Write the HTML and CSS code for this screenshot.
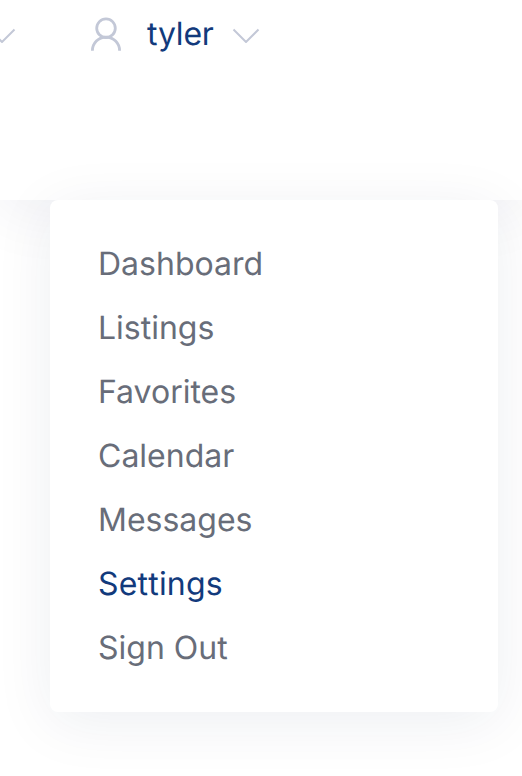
FILE: index.html
```
<!DOCTYPE html>
<html lang="en">
<head>
<meta charset="utf-8">
<title>Account menu</title>
<link rel="stylesheet" href="styles.css">
</head>
<body>
<header class="header">
  <nav class="bar">
    <svg class="chevron chevron-prev" width="28" height="16" viewBox="0 0 28 16"><path d="M1.500 2.500 14 15 26.500 2.500"/></svg>
    <a class="user">
      <svg class="avatar" width="32" height="36" viewBox="0 0 32 36"><circle cx="16" cy="11.200" r="9.300"/><path d="M2.400 33.700A13.600 13.600 0 0 1 29.600 33.700"/></svg>
      <span class="name">tyler</span>
      <svg class="chevron" width="28" height="16" viewBox="0 0 28 16"><path d="M1.500 2.500 14 15 26.500 2.500"/></svg>
    </a>
  </nav>
</header>
<main class="page">
  <ul class="menu">
    <li>Dashboard</li>
    <li>Listings</li>
    <li>Favorites</li>
    <li>Calendar</li>
    <li>Messages</li>
    <li class="active">Settings</li>
    <li>Sign Out</li>
  </ul>
</main>
</body>
</html>
```
FILE: styles.css
```
* { box-sizing: border-box; }
body { margin: 0; height: 776px; overflow: hidden; background: #fff; font-family: Inter, "Liberation Sans", sans-serif; font-size: 32px; text-rendering: geometricPrecision; }
.header { height: 200px; background: #fff; box-shadow: 0 10px 60px rgba(20, 35, 90, .07); }
.bar { display: flex; height: 70px; align-items: center; }
.user { display: flex; align-items: center; color: #123a7c; margin-left: 74px; }
.name { margin: 0 18.500px 0 25px; padding-bottom: 4px; letter-spacing: -.2px; }
.chevron, .avatar { flex: none; fill: none; stroke: #c3c8d7; stroke-width: 2; }
.avatar { stroke-width: 2.8; }
.chevron-prev { margin-left: -12px; }
.page { padding: 0 24px 0 50px; }
.menu { list-style: none; margin: 0; height: 512px; padding: 32px 48px; border-radius: 8px; background: #fff; color: #686d79; box-shadow: 0 10px 60px rgba(10, 40, 80, .075); }
.menu li { height: 64px; line-height: 64px; }
.menu .active { color: #123a7c; font-kerning: none; letter-spacing: .2px; }
```
